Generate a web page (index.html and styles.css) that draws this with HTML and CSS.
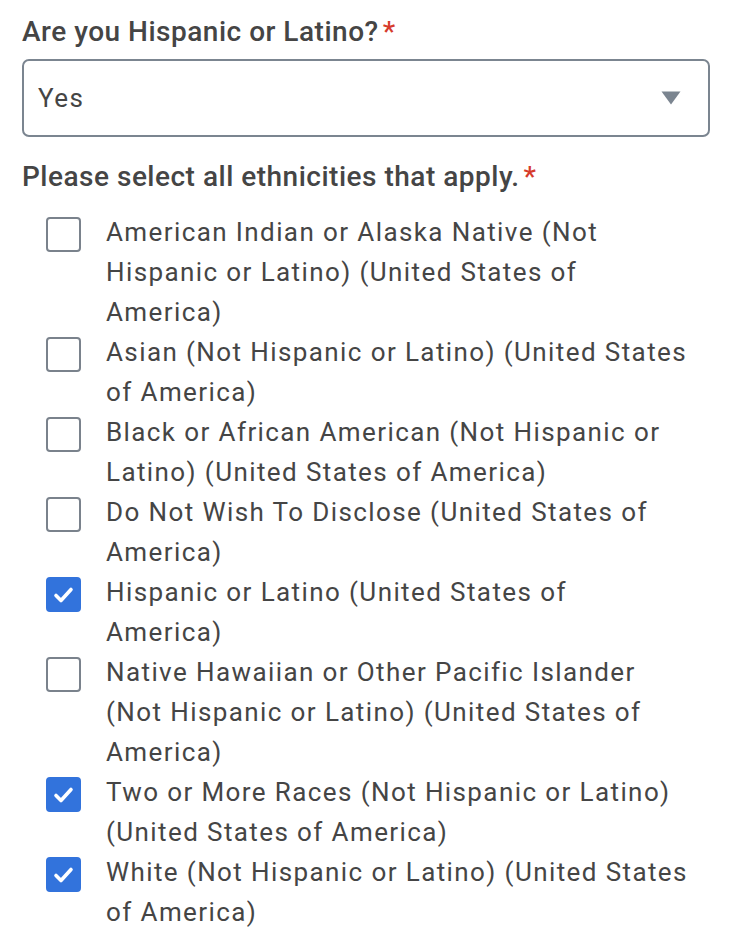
FILE: index.html
```html
<!DOCTYPE html>
<html>
<head>
<meta charset="utf-8">
<link rel="stylesheet" href="styles.css">
</head>
<body>
<div class="form">
  <div class="field-label">Are you Hispanic or Latino?<span class="req">*</span></div>
  <div class="select">
    <span class="select-value">Yes</span>
    <svg class="select-arrow" width="20" height="14" viewBox="0 0 20 14"><path d="M0.5 0.5 H19.5 L10 13.5 Z" fill="#7b8590"/></svg>
  </div>
  <div class="field-label label-2">Please select all ethnicities that apply.<span class="req">*</span></div>
  <div class="options">
    <div class="option"><span class="box"></span><span class="opt-text">American Indian or Alaska Native (Not Hispanic or Latino) (United States of America)</span></div>
    <div class="option"><span class="box"></span><span class="opt-text">Asian (Not Hispanic or Latino) (United States of America)</span></div>
    <div class="option"><span class="box"></span><span class="opt-text">Black or African American (Not Hispanic or Latino) (United States of America)</span></div>
    <div class="option"><span class="box"></span><span class="opt-text">Do Not Wish To Disclose (United States of America)</span></div>
    <div class="option"><span class="box checked"><svg width="21" height="18" viewBox="0 0 21 18"><path d="M3 9.5 L8 14.5 L18 3.5" fill="none" stroke="#fff" stroke-width="3.6" stroke-linecap="round" stroke-linejoin="round"/></svg></span><span class="opt-text">Hispanic or Latino (United States of America)</span></div>
    <div class="option"><span class="box"></span><span class="opt-text">Native Hawaiian or Other Pacific Islander (Not Hispanic or Latino) (United States of America)</span></div>
    <div class="option"><span class="box checked"><svg width="21" height="18" viewBox="0 0 21 18"><path d="M3 9.5 L8 14.5 L18 3.5" fill="none" stroke="#fff" stroke-width="3.6" stroke-linecap="round" stroke-linejoin="round"/></svg></span><span class="opt-text">Two or More Races (Not Hispanic or Latino) (United States of America)</span></div>
    <div class="option"><span class="box checked"><svg width="21" height="18" viewBox="0 0 21 18"><path d="M3 9.5 L8 14.5 L18 3.5" fill="none" stroke="#fff" stroke-width="3.6" stroke-linecap="round" stroke-linejoin="round"/></svg></span><span class="opt-text">White (Not Hispanic or Latino) (United States of America)</span></div>
  </div>
</div>
</body>
</html>
```
FILE: styles.css
```css
html, body {
  margin: 0;
  padding: 0;
  background: #fff;
}
body {
  font-family: Roboto, "Liberation Sans", sans-serif;
  color: #454545;
}
.form {
  width: 688px;
  padding: 12px 0 0 22px;
}
.field-label {
  font-size: 28px;
  font-weight: 500;
  line-height: 40px;
  letter-spacing: 0.5px;
  color: #454545;
}
.req {
  color: #d63b2c;
  margin-left: 4px;
}
.select {
  margin-top: 7px;
  height: 74px;
  border: 2px solid #7b8590;
  border-radius: 7px;
  display: flex;
  align-items: center;
  justify-content: space-between;
  padding: 0 27px 0 14px;
}
.select-value {
  font-size: 26px;
  letter-spacing: 1.4px;
}
.label-2 {
  margin-top: 20px;
}
.options {
  margin-top: 15px;
  padding: 0 22px 0 24px;
}
.option {
  display: flex;
  align-items: flex-start;
  gap: 25px;
}
.box {
  flex: none;
  width: 31px;
  height: 31px;
  margin-top: 5px;
  border: 2px solid #7a828c;
  border-radius: 4px;
  display: flex;
  align-items: center;
  justify-content: center;
  background: #fff;
}
.box.checked {
  background: #3273dc;
  border-color: #3273dc;
}
.opt-text {
  font-size: 26px;
  line-height: 40px;
  letter-spacing: 1.4px;
}
```
